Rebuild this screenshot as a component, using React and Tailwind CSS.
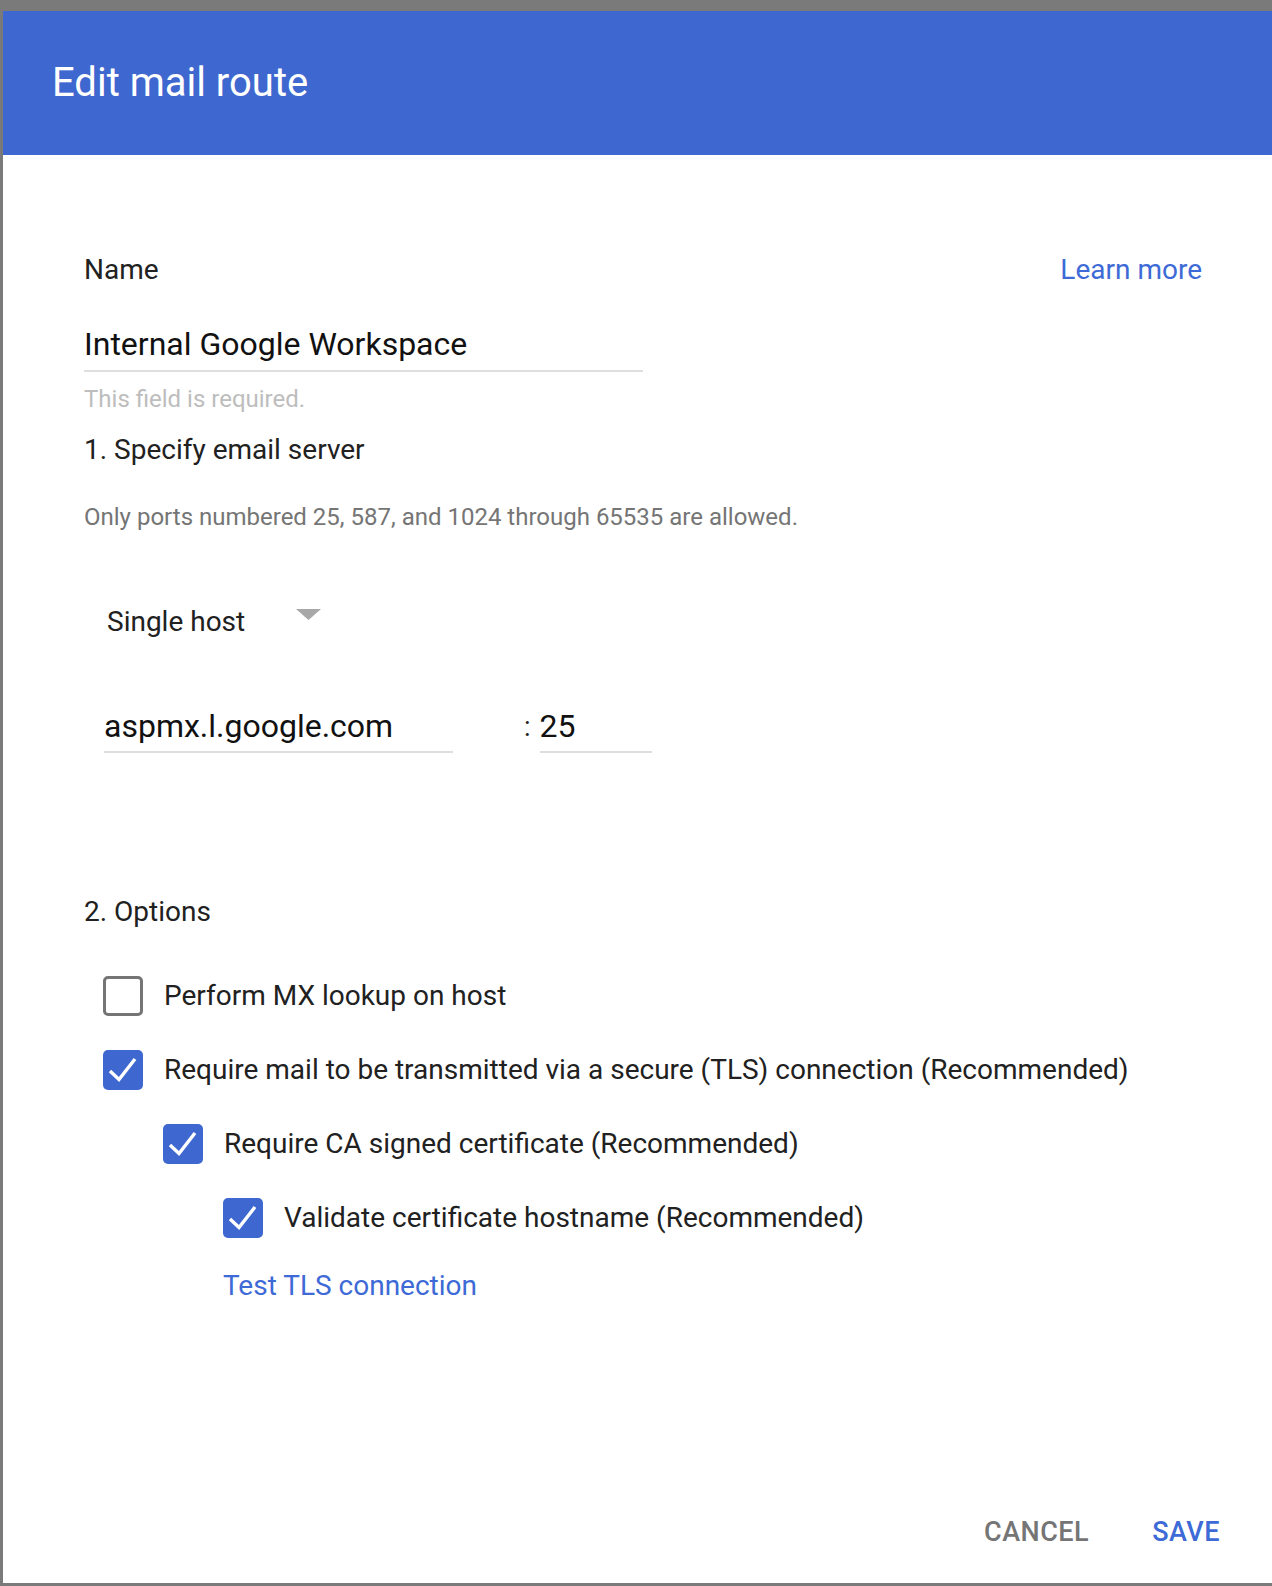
import React from "react";

const font = { fontFamily: "Roboto, 'Noto Sans', Arial, sans-serif" };

function Check({ checked }) {
  if (!checked) {
    return (
      <div className="w-[40px] h-[40px] shrink-0 rounded-[5px] border-[3px] border-[#757575] bg-white" />
    );
  }
  return (
    <div className="w-[40px] h-[40px] shrink-0 rounded-[5px] bg-[#3f67d0] flex items-center justify-center">
      <svg width="40" height="40" viewBox="0 0 40 40">
        <polyline points="7,21 16,29.5 32,9" fill="none" stroke="white" strokeWidth="3.4" />
      </svg>
    </div>
  );
}

function Option({ indent, checked, label, mt }) {
  return (
    <div className={`flex items-center h-[40px] ${indent} ${mt}`}>
      <Check checked={checked} />
      <span className="ml-[21px] text-[28px] text-[#212121] whitespace-nowrap">{label}</span>
    </div>
  );
}

export default function App() {
  return (
    <div className="w-[1272px] h-[1586px] bg-[#7a7a7a] pt-[11px] pl-[3px] pb-[3px] overflow-hidden" style={font}>
      <div className="w-[1269px] h-[1572px] bg-white flex flex-col">
        <div className="h-[144px] bg-[#3f67d0] flex items-center pl-[49px]">
          <h1 className="text-[40px] text-white font-normal leading-none">Edit mail route</h1>
        </div>
        <div className="flex flex-col pl-[81px] pr-[70px] pt-[95px] flex-1">
          <div className="h-[40px] flex items-center justify-between">
            <span className="text-[28px] text-[#212121]">Name</span>
            <a className="text-[28px] text-[#3d6ad6]">Learn more</a>
          </div>
          <div className="mt-[32px] w-[559px] h-[50px] flex items-center border-b-2 border-[#dedede] pb-[4px]">
            <span className="text-[32px] text-[#111]">Internal Google Workspace</span>
          </div>
          <div className="mt-[13px] h-[28px] flex items-center">
            <span className="text-[24px] text-[#bdbdbd]">This field is required.</span>
          </div>
          <div className="mt-[17px] h-[40px] flex items-center">
            <span className="text-[28px] text-[#212121]">1. Specify email server</span>
          </div>
          <div className="mt-[32px] h-[30px] flex items-center">
            <span className="text-[24px] text-[#757575]">Only ports numbered 25, 587, and 1024 through 65535 are allowed.</span>
          </div>
          <div className="mt-[70px] h-[40px] flex items-center pl-[23px]">
            <span className="text-[28px] text-[#212121]">Single host</span>
            <svg className="ml-[51px] -mt-[16px]" width="25" height="11" viewBox="0 0 25 11">
              <polygon points="0,0 25,0 12.5,11" fill="#a8a8a8" />
            </svg>
          </div>
          <div className="mt-[61px] flex items-end pl-[20px]">
            <div className="w-[349px] h-[50px] flex items-center border-b-2 border-[#dedede] pb-[2px]">
              <span className="text-[32px] text-[#111]">aspmx.l.google.com</span>
            </div>
            <div className="ml-[71px] h-[50px] flex items-center pb-[2px]">
              <span className="text-[27px] text-[#212121]">:</span>
            </div>
            <div className="ml-[9px] w-[112px] h-[50px] flex items-center border-b-2 border-[#dedede] pb-[2px]">
              <span className="text-[32px] text-[#111]">25</span>
            </div>
          </div>
          <div className="mt-[139px] h-[40px] flex items-center">
            <span className="text-[28px] text-[#212121]">2. Options</span>
          </div>
          <Option indent="pl-[19px]" mt="mt-[44px]" checked={false} label="Perform MX lookup on host" />
          <Option indent="pl-[19px]" mt="mt-[34px]" checked label="Require mail to be transmitted via a secure (TLS) connection (Recommended)" />
          <Option indent="pl-[79px]" mt="mt-[34px]" checked label="Require CA signed certificate (Recommended)" />
          <Option indent="pl-[139px]" mt="mt-[34px]" checked label="Validate certificate hostname (Recommended)" />
          <div className="mt-[28px] h-[40px] flex items-center pl-[139px]">
            <a className="text-[28px] text-[#3d6ad6]">Test TLS connection</a>
          </div>
          <div className="mt-auto mb-[31px] -mr-[18px] h-[40px] flex items-center justify-end">
            <button className="text-[27px] font-medium text-[#757575] tracking-[0.5px]">CANCEL</button>
            <button className="ml-[63px] text-[27px] font-medium text-[#3d6ad6] tracking-[0.5px]">SAVE</button>
          </div>
        </div>
      </div>
    </div>
  );
}
